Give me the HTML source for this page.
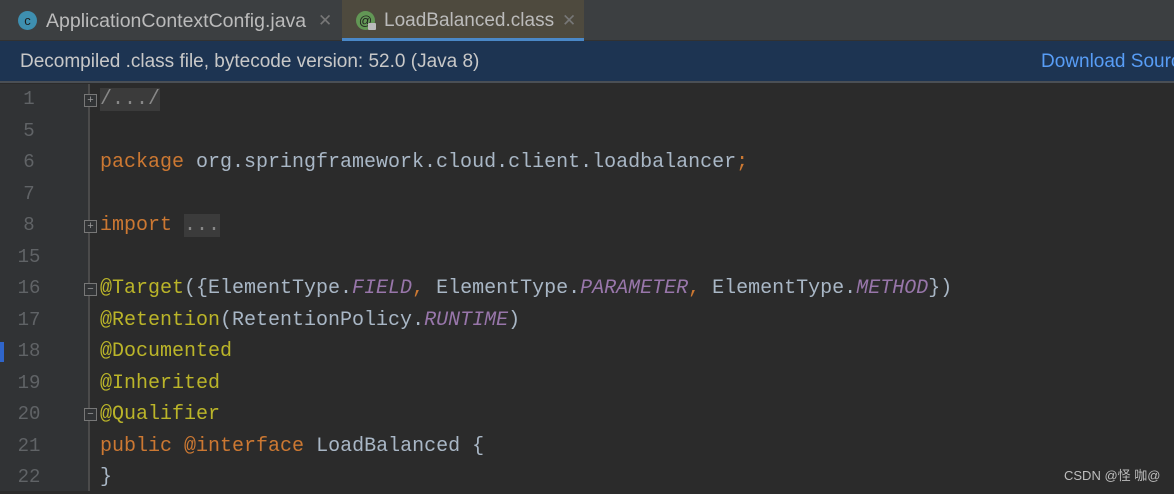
<!DOCTYPE html>
<html><head><meta charset="utf-8"><style>
*{margin:0;padding:0;box-sizing:border-box}
body{width:1174px;height:491px;overflow:hidden;background:#2b2b2b;font-family:"Liberation Sans",sans-serif;position:relative}
.tabs{position:absolute;left:0;top:0;width:1174px;height:41px;background:#3c3f41;border-bottom:1px solid #323232}
.tab{position:absolute;top:0;height:41px;color:#bbbbbb;font-size:19.5px;line-height:42px;white-space:nowrap}
.ic{position:absolute;top:11px;width:19px;height:19px;border-radius:50%;font-size:13px;line-height:19px;text-align:center;color:#1e1e1e}
.x{position:absolute;top:0;color:#777;font-size:17px}
.banner{position:absolute;left:0;top:41px;width:1174px;height:42px;background:#1d3452;border-bottom:2px solid #4a4f55;color:#c8c8c8;font-size:19px;line-height:41px;white-space:nowrap}
.gut{position:absolute;left:0;top:84px;width:90px;height:407px;background:#313335;border-right:2px solid #4b4b4b}
.ln{position:absolute;left:0;width:58px;text-align:center;color:#606366;font-family:"Liberation Mono",monospace;font-size:19px;height:31.5px;line-height:31.5px}
.code{position:absolute;left:100px;font-family:"Liberation Mono",monospace;font-size:20px;height:31.5px;line-height:31.5px;white-space:pre;color:#a9b7c6}
.k{color:#cc7832}.a{color:#bbb529}.i{color:#9876aa;font-style:italic}
.fold{background:#3b3b3b;color:#a9b7c6}
.fb{position:absolute;left:84px;width:13px;height:13px;border:1px solid #777;background:#313335;color:#999;font-size:11px;line-height:11px;text-align:center}
</style></head><body>
<div class="tabs">
 <div class="tab" style="left:0;width:342px"><span class="ic" style="left:18px;background:#3e8fb0">c</span><span style="position:absolute;left:46px">ApplicationContextConfig.java</span><span class="x" style="left:318px">✕</span></div>
 <div class="tab" style="left:342px;width:242px;background:#4e4a3e;border-bottom:4px solid #4a88c7;height:42px;font-size:19px"><span class="ic" style="left:14px;background:#629755">@</span><span style="position:absolute;left:26px;top:23px;width:8px;height:7px;background:#bbb;border-radius:1px"></span><span style="position:absolute;left:42px">LoadBalanced.class</span><span class="x" style="left:220px">✕</span></div>
</div>
<div class="banner"><span style="position:absolute;left:20px">Decompiled .class file, bytecode version: 52.0 (Java 8)</span><span style="position:absolute;left:1041px;color:#589df6">Download Sources</span></div>
<div class="gut"></div>
<div style="position:absolute;left:0;top:342px;width:4px;height:20px;background:#2f65ca"></div>
<div class="ln" style="top:84px">1</div>
<div class="ln" style="top:115.5px">5</div>
<div class="ln" style="top:147px">6</div>
<div class="ln" style="top:178.5px">7</div>
<div class="ln" style="top:210px">8</div>
<div class="ln" style="top:241.5px">15</div>
<div class="ln" style="top:273px">16</div>
<div class="ln" style="top:304.5px">17</div>
<div class="ln" style="top:336px">18</div>
<div class="ln" style="top:367.5px">19</div>
<div class="ln" style="top:399px">20</div>
<div class="ln" style="top:430.5px">21</div>
<div class="ln" style="top:462px">22</div>
<div class="fb" style="top:94px">+</div>
<div class="fb" style="top:220px">+</div>
<div class="fb" style="top:283px">−</div>
<div class="fb" style="top:408px">−</div>
<div class="code" style="top:84px"><span class="fold" style="color:#888">/.../</span></div>
<div class="code" style="top:147px"><span class="k">package</span> org.springframework.cloud.client.loadbalancer<span class="k">;</span></div>
<div class="code" style="top:210px"><span class="k">import</span> <span class="fold" style="color:#888">...</span></div>
<div class="code" style="top:273px"><span class="a">@Target</span>({ElementType.<span class="i">FIELD</span><span class="k">,</span> ElementType.<span class="i">PARAMETER</span><span class="k">,</span> ElementType.<span class="i">METHOD</span>})</div>
<div class="code" style="top:304.5px"><span class="a">@Retention</span>(RetentionPolicy.<span class="i">RUNTIME</span>)</div>
<div class="code" style="top:336px"><span class="a">@Documented</span></div>
<div class="code" style="top:367.5px"><span class="a">@Inherited</span></div>
<div class="code" style="top:399px"><span class="a">@Qualifier</span></div>
<div class="code" style="top:430.5px"><span class="k">public</span> <span class="k">@interface</span> LoadBalanced {</div>
<div class="code" style="top:462px">}</div>
<div style="position:absolute;left:1064px;top:465px;color:#bdbdbd;font-size:13px;font-family:'Liberation Sans','Noto Sans CJK SC',sans-serif">CSDN @怪 咖@</div>
</body></html>
